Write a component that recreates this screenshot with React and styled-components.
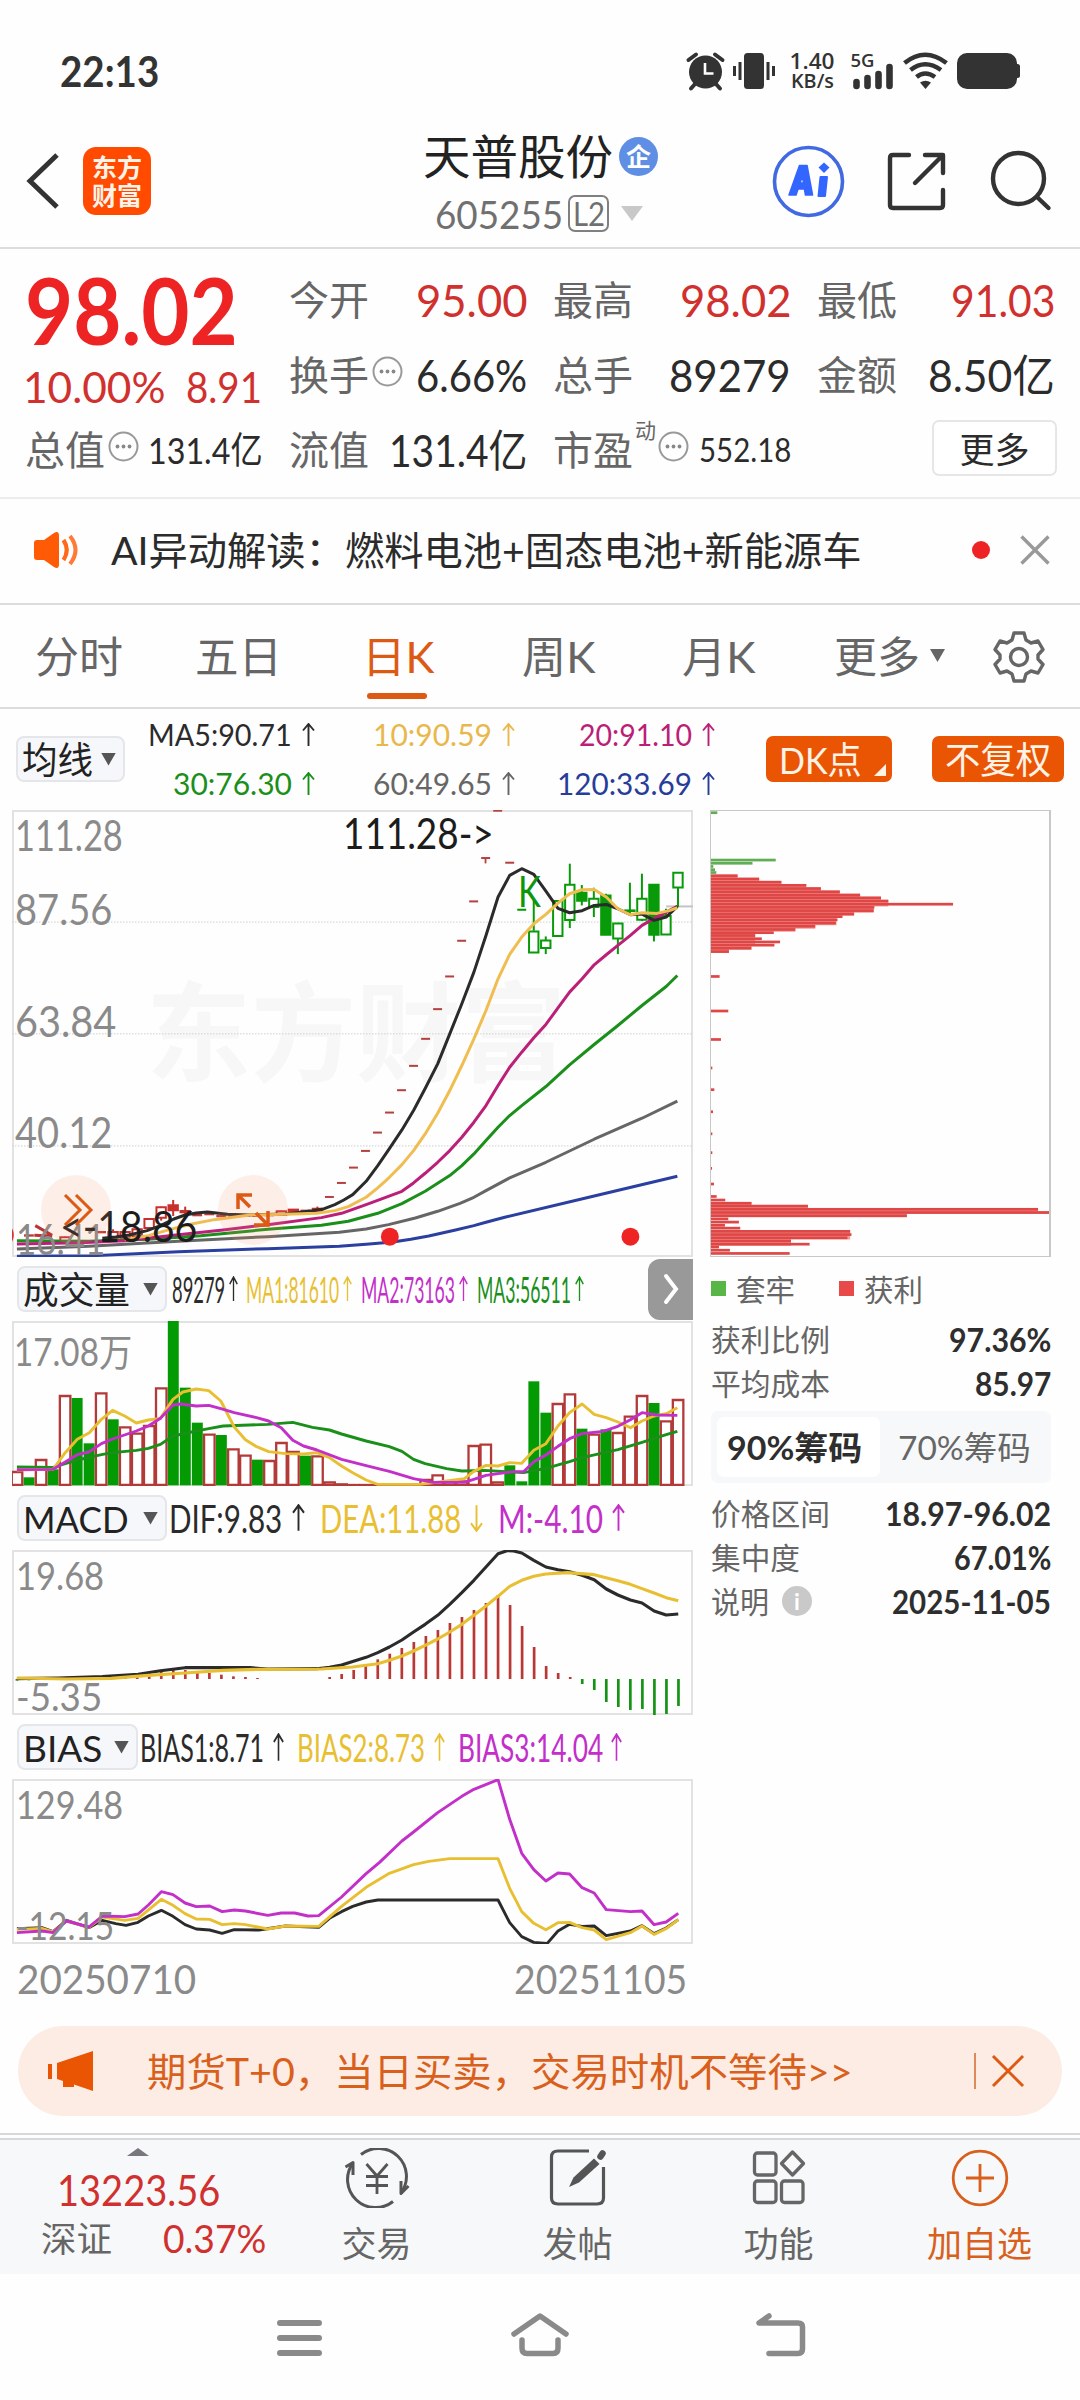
import React, { useLayoutEffect, useRef, useState } from "react";
import styled, { createGlobalStyle } from "styled-components";

const RED = "#d0312f";
const ORANGE = "#ea5504";
const GREEN = "#1a8f1a";
const PURPLE = "#c22fc9";
const GOLD = "#e9bf32";
const INK = "#2b2b2b";

// condenses a label so it takes exactly w pixels
function Fit({ w, children }) {
  const ref = useRef(null);
  const [scale, setScale] = useState(1);

  useLayoutEffect(() => {
    const natural = ref.current.offsetWidth;
    if (natural) setScale(w / natural);
  }, [w, children]);

  return (
    <FitBox $w={w}>
      <FitInner ref={ref} style={{ transform: `scaleX(${scale})` }}>
        {children}
      </FitInner>
    </FitBox>
  );
}

function Arrow({ color, down, w = 13, h = 24 }) {
  return (
    <svg width={w} height={h} viewBox="0 0 13 24" preserveAspectRatio="none">
      <path
        d={down ? "M6.5 1V23M1 16.5L6.5 23L12 16.5" : "M6.5 23V1M1 7.5L6.5 1L12 7.5"}
        fill="none"
        stroke={color}
        strokeWidth="1.9"
      />
    </svg>
  );
}

function Line({ pts, color, w = 2.2 }) {
  return (
    <polyline
      points={pts}
      fill="none"
      stroke={color}
      strokeWidth={w}
      strokeLinejoin="round"
      vectorEffect="non-scaling-stroke"
    />
  );
}

const barX = (i) => 39 + 26.88 * i;

const maLines = [
  ["#2a3fa0", "39,1367 210,1365 400,1353 600,1344 760,1337 820,1331 880,1324 920,1316 960,1306 1020,1288 1061,1275 1088,1265 1130,1250 1330,1186 1516,1127"],
  ["#666666", "39,1345 200,1337 400,1322 600,1308 760,1295 820,1285 870,1272 930,1252 980,1232 1030,1208 1061,1190 1088,1170 1141,1132 1222,1085 1330,1016 1437,953 1516,902"],
  [GREEN, "39,1320 200,1322 333,1316 450,1305 600,1286 720,1274 780,1262 846,1238 900,1209 952,1172 1007,1125 1034,1095 1061,1060 1088,1020 1115,980 1141,945 1168,915 1222,858 1275,793 1330,732 1383,675 1437,615 1491,558 1516,525"],
  ["#bb1f78", "39,1330 180,1326 280,1320 400,1302 500,1288 600,1272 720,1251 765,1238 820,1212 900,1172 926,1147 952,1118 980,1085 1007,1050 1034,1010 1061,965 1088,915 1115,855 1141,800 1168,755 1195,712 1222,672 1249,622 1275,575 1303,535 1330,493 1357,463 1383,435 1411,405 1437,375 1470,350 1516,318"],
  ["#2b2b2b", "230,1313 260,1309 290,1303 330,1290 360,1275 390,1255 415,1243 440,1237 465,1234 490,1238 510,1241 560,1243 640,1240 700,1230 725,1225 750,1212 770,1198 790,1182 820,1142 846,1095 872,1044 900,988 926,930 952,864 980,790 1007,700 1034,610 1061,515 1088,405 1115,290 1141,225 1168,205 1195,222 1222,272 1249,324 1275,337 1303,331 1330,315 1357,312 1383,325 1411,343 1437,341 1464,360 1491,350 1516,318"],
  ["#f0bd50", "280,1317 333,1305 380,1287 430,1270 480,1257 560,1243 640,1241 710,1238 750,1230 780,1218 820,1190 846,1162 872,1130 900,1092 926,1050 952,1000 980,938 1007,870 1034,795 1061,715 1088,630 1115,535 1141,462 1168,410 1195,370 1222,342 1249,308 1275,280 1303,268 1330,267 1357,290 1383,325 1411,343 1437,337 1470,339 1500,330 1516,322"],
];

// limit-up days only leave a dash
const dashes = [1189, 1147, 1101, 1051, 996, 936, 869, 796, 715, 626, 528, 421, 303, 173, 31, 187];

// [day, bodyTop, bodyBottom, wickTop, wickBottom, filled]
const candles = [
  [43, 391, 457, 300, 391, 0],
  [44, 418, 444, 408, 461, 0],
  [45, 300, 408, 300, 408, 0],
  [46, 251, 360, 190, 383, 0],
  [47, 275, 302, 254, 315, 1],
  [48, 293, 321, 262, 350, 0],
  [49, 283, 404, 280, 404, 1],
  [50, 367, 415, 367, 461, 0],
  [51, 328, 330, 247, 343, 1],
  [52, 293, 359, 220, 362, 0],
  [53, 251, 404, 251, 423, 1],
  [54, 345, 403, 325, 403, 0],
  [55, 215, 262, 215, 320, 0],
];

const earlyCandles = [
  [4, 1308, 1326, 1308, 1326, 0],
  [8, 1292, 1312, 1286, 1314, 0],
  [9, 1292, 1312, 1288, 1316, 0],
  [10, 1284, 1308, 1284, 1308, 0],
  [11, 1253, 1283, 1253, 1290, 0],
  [12, 1218, 1252, 1218, 1260, 0],
  [13, 1212, 1230, 1198, 1246, 1],
  [14, 1229, 1236, 1218, 1244, 1],
  [22, 1230, 1244, 1230, 1246, 0],
  [23, 1225, 1232, 1225, 1232, 1],
  [25, 1222, 1232, 1218, 1234, 1],
];

const smallDashes = [
  [7, 1294], [15, 1243], [16, 1240], [17, 1246], [18, 1247], [19, 1244],
  [20, 1245], [21, 1243], [24, 1230], [1, 1304],
];

const volume = [
  ["r", 660], ["g", 679], ["r", 624], ["g", 655], ["r", 432], ["g", 441], ["g", 577], ["r", 424],
  ["g", 505], ["r", 526], ["r", 545], ["r", 522], ["r", 409], ["g", 210], ["g", 410], ["g", 515],
  ["r", 548], ["g", 552], ["r", 592], ["r", 611], ["g", 626], ["r", 627], ["r", 573], ["r", 600],
  ["g", 614], ["r", 613], ["r", 691], ["r", 697], ["r", 699], ["r", 699], ["r", 699], ["r", 700],
  ["r", 697], ["r", 700], ["r", 684], ["r", 670], ["r", 690], ["r", 688], ["r", 582], ["r", 578],
  ["r", 691], ["g", 643], ["g", 691], ["g", 391], ["g", 485], ["r", 456], ["r", 427], ["g", 533],
  ["r", 548], ["g", 535], ["r", 543], ["r", 494], ["r", 432], ["g", 456], ["r", 508], ["r", 444],
];

const volumeLines = [
  [GREEN, "39,648 120,649 147,638 174,627 201,619 228,611 253,605 306,598 333,592 360,580 388,555 440,540 468,533 500,525 600,520 656,514 700,529 738,537 765,549 820,570 872,587 900,601 926,625 952,638 1000,653 1034,660 1085,658 1172,665 1222,652 1275,632 1303,620 1383,596 1437,574 1491,551 1516,541"],
  [GOLD, "39,657 120,655 147,605 174,565 201,545 228,505 253,478 280,495 306,516 333,507 360,502 388,445 410,423 440,414 468,419 495,450 525,528 550,566 575,587 602,602 640,608 680,609 710,605 738,620 765,645 790,665 820,687 846,700 940,700 1000,690 1040,683 1060,662 1088,643 1115,645 1141,635 1168,637 1195,598 1222,578 1249,525 1275,485 1303,459 1330,490 1357,500 1383,513 1411,530 1437,510 1464,495 1491,488 1516,470"],
  [PURPLE, "39,656 120,655 147,633 174,611 200,603 228,578 253,564 306,540 333,525 360,502 388,462 405,459 440,465 468,463 495,473 525,485 575,500 602,510 630,530 656,568 680,585 710,597 765,625 820,644 872,661 926,683 970,694 1040,694 1088,673 1115,668 1150,662 1172,662 1195,632 1222,612 1249,586 1275,563 1303,548 1350,541 1383,526 1411,506 1437,485 1470,492 1516,493"],
];

const macdBars = [
  569, 568, 567, 567, 566, 561, 561, 559, 557, 555, 552, 546, 538, 533, 537, 541, 546, 551, 556,
  558, 561, 564, 564, 564, 564, 564, 558, 549, 537, 522, 505, 488, 471, 453, 435, 417, 396, 378,
  357, 336, 312, 342, 405, 468, 525, 546, 558, 579, 597, 633, 648, 657, 654, 672, 669, 645,
];

const macdLines = [
  [INK, "39,563 130,561 230,557 310,550 360,539 415,530 560,530 600,534 710,533 738,529 765,522 820,499 846,485 872,468 900,447 926,423 952,400 980,373 1007,340 1034,305 1061,268 1088,228 1115,188 1135,179 1150,180 1168,186 1195,208 1222,228 1249,236 1275,242 1303,253 1330,266 1357,294 1383,312 1411,327 1437,336 1464,360 1491,372 1518,369"],
  [GOLD, "39,561 150,564 250,562 333,553 415,546 500,538 580,535 720,534 790,528 846,518 872,508 900,495 926,480 952,463 980,444 1007,423 1034,400 1061,373 1088,345 1115,316 1141,286 1168,268 1195,256 1222,249 1270,245 1330,251 1383,269 1411,280 1437,293 1464,306 1491,320 1518,329"],
];

const biasLines = [
  [INK, "39,623 95,620 120,632 150,598 200,620 230,598 260,608 283,613 308,605 333,585 362,568 388,586 415,611 440,624 470,627 498,637 525,626 580,627 640,615 714,619 740,590 765,572 790,556 820,543 846,537 1115,537 1141,605 1168,647 1195,664 1225,667 1249,630 1275,610 1303,616 1330,615 1357,644 1411,630 1437,614 1464,638 1491,621 1518,596"],
  [GOLD, "39,625 95,622 120,633 150,600 200,619 230,588 280,598 310,592 362,535 388,553 415,578 440,594 470,595 498,611 525,608 550,611 600,624 640,615 714,616 765,556 820,499 872,457 926,431 960,421 1007,413 1115,413 1141,502 1168,572 1195,607 1222,626 1249,605 1275,604 1303,620 1330,627 1357,656 1411,635 1437,615 1464,640 1491,623 1518,596"],
  [PURPLE, "39,635 95,630 120,635 150,600 200,618 230,585 280,587 310,579 333,552 362,512 388,521 415,546 440,557 470,555 498,572 525,567 550,570 600,583 630,576 660,576 690,585 714,584 765,528 820,458 850,424 900,360 926,333 980,275 1034,226 1061,205 1115,176 1141,295 1168,397 1195,446 1222,480 1249,456 1275,459 1303,500 1330,516 1357,566 1411,572 1437,570 1464,611 1491,603 1518,577"],
];

// [y, right edge]
const trapped = [[314, 81], [447, 257], [456, 187], [465, 69], [474, 74], [482, 78]];
const profit = [
  [491, 142], [500, 207], [509, 274], [518, 349], [527, 393], [536, 450], [545, 511], [553, 574],
  [562, 596], [571, 791], [580, 554], [589, 552], [598, 493], [606, 458], [615, 443], [624, 438],
  [633, 376], [642, 316], [651, 251], [659, 195], [668, 215], [677, 270], [686, 253], [695, 184],
  [704, 116], [774, 88], [871, 114], [951, 92], [1031, 66], [1092, 72], [1154, 68], [1216, 66],
  [1269, 66], [1313, 65], [1357, 71], [1392, 79], [1402, 105], [1411, 184], [1419, 354],
  [1428, 1047], [1437, 1080], [1446, 652], [1455, 114], [1464, 146], [1473, 104], [1481, 150],
  [1490, 481], [1499, 485], [1508, 473], [1517, 303], [1526, 359], [1534, 86], [1543, 119],
  [1552, 299],
];

function Candle({ d, color }) {
  const [i, top, bottom, high, low, filled] = d;
  const x = barX(i);
  return (
    <g stroke={color} strokeWidth="2" fill={filled ? color : "#fff"}>
      <line x1={x} x2={x} y1={high} y2={low} vectorEffect="non-scaling-stroke" />
      <rect
        x={x - 10.5}
        y={top + 2}
        width={21}
        height={Math.max(bottom - top - 3, 2)}
        vectorEffect="non-scaling-stroke"
      />
    </g>
  );
}

function PriceChart() {
  return (
    <Chart $h={447}>
      <Watermark>
        <Fit w={420}>东方财富</Fit>
      </Watermark>
      <Plot viewBox="28 29 1523 1340" preserveAspectRatio="none">
        {[365, 700, 1036].map((y) => (
          <line
            key={y}
            x1="28"
            x2="1551"
            y1={y}
            y2={y}
            stroke="#cfcfcf"
            strokeDasharray="1.5 1.5"
            vectorEffect="non-scaling-stroke"
          />
        ))}
        <rect x="1491" y="315" width="60" height="6" fill="#c4c4c4" />
        {smallDashes.map(([i, y]) => (
          <rect key={i} x={barX(i) - 11} y={y - 3} width="22" height="7" fill="#c23a38" />
        ))}
        {earlyCandles.map((d) => (
          <Candle key={d[0]} d={d} color="#c8302e" />
        ))}
        <path
          d="M80 1275L118 1304M78 1304L118 1306"
          stroke="#b93432"
          strokeWidth="3"
          fill="none"
          vectorEffect="non-scaling-stroke"
        />
        {dashes.map((y, k) => (
          <rect key={y} x={barX(26 + k) - 10} y={y - 3} width="20" height="6" fill="#b5413f" />
        ))}
        <rect x="1085" y="173" width="4" height="16" fill="#b5413f" />
        <rect x={barX(42) - 10} y="325" width="20" height="6" fill="#009a00" />
        {candles.map((d) => (
          <Candle key={d[0]} d={d} color="#089a08" />
        ))}
        {maLines.map(([color, pts]) => (
          <Line key={color} pts={pts} color={color} w={3} />
        ))}
        <ellipse cx="873" cy="1308" rx="20" ry="27" fill="#ee2424" />
        <ellipse cx="1411" cy="1308" rx="20" ry="27" fill="#ee2424" />
        <ellipse cx="22" cy="1303" rx="10" ry="24" fill="#d33" />
      </Plot>
      <Label $x={3} $y={10} $size={42}><Fit w={108}>111.28</Fit></Label>
      <Label $x={3} $y={84} $size={42}><Fit w={97}>87.56</Fit></Label>
      <Label $x={3} $y={196} $size={42}><Fit w={101}>63.84</Fit></Label>
      <Label $x={3} $y={307} $size={42}><Fit w={97}>40.12</Fit></Label>
      <Label $x={4} $y={414} $size={42}><Fit w={89}>16.41</Fit></Label>
      <Label $x={331} $y={8} $size={42} $color="#1c1c1c"><Fit w={151}>111.28-&gt;</Fit></Label>
      <Label $x={48} $y={401} $size={42} $color="#1c1c1c"><Fit w={137}>&lt;-18.86</Fit></Label>
      <Label $x={506} $y={66} $size={42} $color="#0d960d"><Fit w={23}>K</Fit></Label>
      <RoundTool $x={29} $y={365}>
        <svg width="70" height="70" viewBox="0 0 70 70" fill="none" stroke="#dd5a14" strokeWidth="3">
          <path d="M24 20L39 35L24 50M35 20L50 35L35 50" />
        </svg>
      </RoundTool>
      <RoundTool $x={206} $y={365}>
        <svg width="70" height="70" viewBox="0 0 70 70" fill="none" stroke="#dd5a14" strokeWidth="3.5">
          <path d="M20 34V20H34M21 21L32 32M38 38L49 49M36 50H50V36" />
        </svg>
      </RoundTool>
    </Chart>
  );
}

function VolumeChart() {
  return (
    <Chart $h={165}>
      <Plot viewBox="28 210 1523 495" preserveAspectRatio="none">
        {volume.map(([kind, top], i) =>
          kind === "g" ? (
            <rect key={i} x={barX(i) - 12} y={top} width="24.5" height={703 - top} fill="#039a03" />
          ) : (
            <rect
              key={i}
              x={barX(i) - 11.5}
              y={top + 3}
              width="23.5"
              height={Math.max(699 - top, 1)}
              fill="#fff"
              stroke="#b23a38"
              strokeWidth="2.3"
              vectorEffect="non-scaling-stroke"
            />
          )
        )}
        {volumeLines.map(([color, pts]) => (
          <Line key={color} pts={pts} color={color} w={2.9} />
        ))}
      </Plot>
      <Label $x={2} $y={15} $size={38}><Fit w={118}>17.08万</Fit></Label>
    </Chart>
  );
}

function MacdChart() {
  return (
    <Chart $h={165}>
      <Plot viewBox="28 177 1523 495" preserveAspectRatio="none">
        {macdBars.map((v, i) => (
          <rect
            key={i}
            x={39 + 26.9 * i - 3}
            y={Math.min(v, 564)}
            width="6"
            height={Math.abs(564 - v)}
            fill={v > 564 ? "#159315" : "#b93836"}
          />
        ))}
        {macdLines.map(([color, pts]) => (
          <Line key={color} pts={pts} color={color} w={3.1} />
        ))}
      </Plot>
      <Label $x={4} $y={10} $size={38}><Fit w={88}>19.68</Fit></Label>
      <Label $x={4} $y={131} $size={38}><Fit w={86}>-5.35</Fit></Label>
    </Chart>
  );
}

function BiasChart() {
  return (
    <Chart $h={165}>
      <Plot viewBox="28 174 1523 495" preserveAspectRatio="none">
        {biasLines.map(([color, pts]) => (
          <Line key={color} pts={pts} color={color} w={2.9} />
        ))}
      </Plot>
      <Label $x={4} $y={10} $size={38}><Fit w={107}>129.48</Fit></Label>
      <Label $x={4} $y={131} $size={38}><Fit w={98}>-12.15</Fit></Label>
    </Chart>
  );
}

function Dots() {
  return (
    <svg width="31" height="31" viewBox="0 0 31 31">
      <circle cx="15.5" cy="15.5" r="14" fill="none" stroke="#999" strokeWidth="2" />
      <circle cx="9.5" cy="15.5" r="1.9" fill="#888" />
      <circle cx="15.5" cy="15.5" r="1.9" fill="#888" />
      <circle cx="21.5" cy="15.5" r="1.9" fill="#888" />
    </svg>
  );
}

function App() {
  return (
    <Page>
      <GlobalStyle />

      <StatusBar>
        <Clock><Fit w={99}>22:13</Fit></Clock>
        <svg width="340" height="60" viewBox="685 41 340 60" fill="#333">
          <circle cx="705.5" cy="72" r="16.5" />
          <path d="M688.5 60L696 54.5M722.5 60L715 54.5M695 84L691 88.5M716 84L720 88.5" stroke="#333" strokeWidth="4" strokeLinecap="round" />
          <path d="M705 63V73.5H713.5" fill="none" stroke="#fff" strokeWidth="2.6" />
          <rect x="744" y="53" width="20" height="36" rx="3.5" />
          <path d="M740 62V80M768 62V80M734.5 66V76M773.5 66V76" stroke="#333" strokeWidth="3" />
          <g fontFamily="'Open Sans', 'Noto Sans', sans-serif" fontWeight="600">
            <text x="789.5" y="68.5" fontSize="21" textLength="45" lengthAdjust="spacingAndGlyphs">1.40</text>
            <text x="791" y="88" fontSize="19" textLength="43" lengthAdjust="spacingAndGlyphs">KB/s</text>
            <text x="850.5" y="67" fontSize="18" textLength="24" lengthAdjust="spacingAndGlyphs">5G</text>
          </g>
          <path d="M856.5 82V86M867.5 78V86M878.5 74V86M889.5 67V86" stroke="#333" strokeWidth="6.6" strokeLinecap="round" />
          <g fill="none" stroke="#333" strokeWidth="4.5">
            <path d="M904.5 63Q925 46.5 946.5 63" />
            <path d="M910.5 70Q925 58.5 941 70" />
            <path d="M916.5 77Q925 70 935 77" />
          </g>
          <path d="M920 82.5Q925.5 79 931 82.5L925.5 89Z" />
          <rect x="957" y="53" width="60" height="36" rx="10" />
          <rect x="1012" y="64" width="8" height="14" rx="2.5" />
        </svg>
      </StatusBar>

      <Header>
        <svg width="36" height="58" viewBox="0 0 36 58" fill="none" stroke="#333" strokeWidth="5">
          <path d="M31 3L4 29L31 55" />
        </svg>
        <Logo>
          <span>东方</span>
          <span>财富</span>
        </Logo>
        <Title>
          <NameRow>
            <Fit w={190}>天普股份</Fit>
            <Badge>企</Badge>
          </NameRow>
          <CodeRow>
            <Fit w={128}>605255</Fit>
            <Level><Fit w={32}>L2</Fit></Level>
            <Triangle $w={22} $h={15} $color="#c8c8c8" />
          </CodeRow>
        </Title>
        <HeaderIcons>
          <svg width="290" height="74" viewBox="770 144 290 74" fill="none">
            <circle cx="808.5" cy="181.5" r="34" stroke="#4169e1" strokeWidth="3.6" />
            <path d="M789 195L799.5 165.500H807L812.500 195H805.500L804.500 189H798L796 195ZM800 183H803.500L802.500 176Z" fill="#3366ff" fillRule="evenodd" stroke="#3366ff" strokeWidth="1.600" strokeLinejoin="round" />
            <path d="M820.5 177H827L825 196H818.5Z" fill="#3366ff" stroke="#3366ff" strokeWidth="2" strokeLinejoin="round" />
            <path d="M824 162.5L829.5 167.5L824 173L818.5 167.5Z" fill="#3366ff" />
            <g stroke="#333" strokeWidth="4.4" strokeLinecap="round" strokeLinejoin="round">
              <path d="M909 155H893Q890 155 890 158V205Q890 208 893 208H940Q943 208 943 205V190" />
              <path d="M925 155H943V173M942 156L915 183" />
              <circle cx="1018.5" cy="178.5" r="25.5" />
              <path d="M1037 197L1048.5 208" />
            </g>
          </svg>
        </HeaderIcons>
      </Header>

      <Quote>
        <Price><Fit w={213}>98.02</Fit></Price>
        <Cell $row={1} $col={2}>
          <Key>今开</Key><Val $red><Fit w={111}>95.00</Fit></Val>
        </Cell>
        <Cell $row={1} $col={3}>
          <Key>最高</Key><Val $red><Fit w={111}>98.02</Fit></Val>
        </Cell>
        <Cell $row={1} $col={4}>
          <Key>最低</Key><Val $red><Fit w={104}>91.03</Fit></Val>
        </Cell>
        <Change>
          <Fit w={142}>10.00%</Fit>
          <Fit w={76}>8.91</Fit>
        </Change>
        <Cell $row={2} $col={2}>
          <Key>换手<Dots /></Key><Val><Fit w={111}>6.66%</Fit></Val>
        </Cell>
        <Cell $row={2} $col={3}>
          <Key>总手</Key><Val><Fit w={122}>89279</Fit></Val>
        </Cell>
        <Cell $row={2} $col={4}>
          <Key>金额</Key><Val><Fit w={127}>8.50亿</Fit></Val>
        </Cell>
        <Cell $row={3} $col={1}>
          <Key>总值<Dots /></Key><Val $size={37}><Fit w={115}>131.4亿</Fit></Val>
        </Cell>
        <Cell $row={3} $col={2}>
          <Key>流值</Key><Val><Fit w={138}>131.4亿</Fit></Val>
        </Cell>
        <Cell $row={3} $col={3}>
          <Key>市盈<sup>动</sup><Dots /></Key><Val $size={32}><Fit w={92}>552.18</Fit></Val>
        </Cell>
        <Cell $row={3} $col={4} $end>
          <MoreButton>更多</MoreButton>
        </Cell>
      </Quote>

      <Notice>
        <svg width="46" height="38" viewBox="0 0 46 38">
          <path d="M1 12Q1 9 4 9H11L21 2Q26 -1 26 5V33Q26 39 21 36L11 29H4Q1 29 1 26Z" fill="#ff5a05" />
          <path d="M30.5 9Q37 19 30.5 29" fill="none" stroke="#ff6a1a" strokeWidth="4.2" />
          <path d="M37 5Q48 19 37 33" fill="none" stroke="#ff7a35" strokeWidth="4" />
        </svg>
        <NoticeText><Fit w={751}>AI异动解读：燃料电池+固态电池+新能源车</Fit></NoticeText>
        <RedDot />
        <svg width="30" height="30" viewBox="0 0 30 30">
          <path d="M1.5 1.5L28.5 28.5M28.5 1.5L1.5 28.5" stroke="#999" strokeWidth="3.4" />
        </svg>
      </Notice>

      <Tabs>
        <Tab $ml={35}><Fit w={88}>分时</Fit></Tab>
        <Tab $ml={72}><Fit w={87}>五日</Fit></Tab>
        <Tab $ml={80} $active><Fit w={73}>日K</Fit></Tab>
        <Tab $ml={87}><Fit w={74}>周K</Fit></Tab>
        <Tab $ml={86}><Fit w={74}>月K</Fit></Tab>
        <Tab $ml={78}><Fit w={86}>更多</Fit></Tab>
        <TabCaret><Triangle $w={15} $h={13} $color="#666" /></TabCaret>
        <svg width="52" height="52" viewBox="0 0 52 52" fill="none" stroke="#666" strokeWidth="3.4" strokeLinejoin="round">
          <path d="M21 2H31L33 9L38 12L45 10L50 18.5L45 24V28L50 33.5L45 42L38 40L33 43L31 50H21L19 43L14 40L7 42L2 33.5L7 28V24L2 18.5L7 10L14 12L19 9Z" />
          <circle cx="26" cy="26" r="8.5" />
        </svg>
      </Tabs>

      <MaRow>
        <Picker $w={109}>
          <Fit w={71}>均线</Fit>
          <Triangle $w={15} $h={13} $color="#555" />
        </Picker>
        <MaGrid>
          <Ma $color={INK}><Fit w={144}>MA5:90.71</Fit><Arrow color={INK} /></Ma>
          <Ma $color="#e9b84d"><Fit w={119}>10:90.59</Fit><Arrow color="#e9b84d" /></Ma>
          <Ma $color="#bb1f78"><Fit w={113}>20:91.10</Fit><Arrow color="#bb1f78" /></Ma>
          <Ma $color={GREEN}><Fit w={119}>30:76.30</Fit><Arrow color={GREEN} /></Ma>
          <Ma $color="#666"><Fit w={119}>60:49.65</Fit><Arrow color="#666" /></Ma>
          <Ma $color="#273d9a"><Fit w={135}>120:33.69</Fit><Arrow color="#273d9a" /></Ma>
        </MaGrid>
        <OrangeButton $w={126} $corner><Fit w={83}>DK点</Fit></OrangeButton>
        <OrangeButton $w={132}><Fit w={106}>不复权</Fit></OrangeButton>
      </MaRow>

      <Body>
        <Left>
          <PriceChart />
          <Indicator>
            <Picker $w={150}>
              <Fit w={107}>成交量</Fit>
              <Triangle $w={15} $h={13} $color="#555" />
            </Picker>
            <Stat $size={36} $color={INK} $ml={5}><Fit w={53}>89279</Fit><Arrow color={INK} w={9} h={26} /></Stat>
            <Stat $size={36} $color={GOLD} $ml={8}><Fit w={93}>MA1:81610</Fit><Arrow color={GOLD} w={9} h={26} /></Stat>
            <Stat $size={36} $color={PURPLE} $ml={9}><Fit w={94}>MA2:73163</Fit><Arrow color={PURPLE} w={9} h={26} /></Stat>
            <Stat $size={36} $color={GREEN} $ml={9}><Fit w={94}>MA3:56511</Fit><Arrow color={GREEN} w={9} h={26} /></Stat>
            <SideButton>
              <svg width="18" height="38" viewBox="0 0 18 38" fill="none" stroke="#fff" strokeWidth="4" strokeLinecap="round">
                <path d="M4 6L14 19L4 32" />
              </svg>
            </SideButton>
          </Indicator>
          <VolumeChart />
          <Indicator>
            <Picker $w={150}>
              <Fit w={106}>MACD</Fit>
              <Triangle $w={15} $h={13} $color="#555" />
            </Picker>
            <Stat $size={38} $color={INK} $ml={2} $gap={10}><Fit w={113}>DIF:9.83</Fit><Arrow color={INK} h={28} /></Stat>
            <Stat $size={38} $color={GOLD} $ml={15} $gap={9}><Fit w={141}>DEA:11.88</Fit><Arrow color={GOLD} h={28} down /></Stat>
            <Stat $size={38} $color={PURPLE} $ml={15} $gap={9}><Fit w={105}>M:-4.10</Fit><Arrow color={PURPLE} h={28} /></Stat>
          </Indicator>
          <MacdChart />
          <Indicator>
            <Picker $w={121}>
              <Fit w={79}>BIAS</Fit>
              <Triangle $w={15} $h={13} $color="#555" />
            </Picker>
            <Stat $size={38} $color={INK} $ml={2} $gap={9}><Fit w={124}>BIAS1:8.71</Fit><Arrow color={INK} w={11} h={29} /></Stat>
            <Stat $size={38} $color={GOLD} $ml={13} $gap={9}><Fit w={128}>BIAS2:8.73</Fit><Arrow color={GOLD} w={11} h={29} /></Stat>
            <Stat $size={38} $color={PURPLE} $ml={13} $gap={8}><Fit w={145}>BIAS3:14.04</Fit><Arrow color={PURPLE} w={11} h={29} /></Stat>
          </Indicator>
          <BiasChart />
          <Dates>
            <Fit w={179}>20250710</Fit>
            <Fit w={173}>20251105</Fit>
          </Dates>
        </Left>

        <Right>
          <ChipPlot viewBox="62 309 1018 1250" preserveAspectRatio="none">
            {trapped.map(([y, x]) => (
              <rect key={y} x="62" y={y - 4} width={x - 62} height="7.6" fill="#62ac55" />
            ))}
            <path d="M62 488H142V497H207V506H274V515H349V524H393V533H450V542H511V551H574V559H596V577H552V595H493V604H440V630H376V640H316V648H195V683H184V692H116V708H62Z" fill="#f39a96" />
            <path d="M62 1408H184V1417H354V1426H1047V1434H1080V1441H652V1450H62ZM62 1486H481V1513H303V1530H62Z" fill="#f39a96" />
            {profit.map(([y, x]) => (
              <rect key={y} x="62" y={y - 4} width={x - 62} height="7.6" fill="#df4746" />
            ))}
          </ChipPlot>
          <Legend>
            <Swatch $color="#58b646" /><Fit w={59}>套牢</Fit>
            <Swatch $color="#e84a4a" $ml={44} /><Fit w={59}>获利</Fit>
          </Legend>
          <Row><Fit w={119}>获利比例</Fit><b><Fit w={102}>97.36%</Fit></b></Row>
          <Row><Fit w={119}>平均成本</Fit><b><Fit w={76}>85.97</Fit></b></Row>
          <Toggle>
            <Option $active><Fit w={135}>90%筹码</Fit></Option>
            <Option><Fit w={133}>70%筹码</Fit></Option>
          </Toggle>
          <Row><Fit w={119}>价格区间</Fit><b><Fit w={166}>18.97-96.02</Fit></b></Row>
          <Row><Fit w={89}>集中度</Fit><b><Fit w={97}>67.01%</Fit></b></Row>
          <Row>
            <Fit w={58}>说明</Fit>
            <Info>i</Info>
            <b><Fit w={159}>2025-11-05</Fit></b>
          </Row>
        </Right>
      </Body>

      <Banner>
        <svg width="46" height="40" viewBox="0 0 46 40" fill={ORANGE}>
          <rect x="0" y="13" width="4" height="15" />
          <path d="M9 12L45 0V40L26 33.5V36H15V30L9 28Z" />
        </svg>
        <BannerText><Fit w={706}>期货T+0，当日买卖，交易时机不等待&gt;&gt;</Fit></BannerText>
        <Divider />
        <svg width="34" height="34" viewBox="0 0 34 34">
          <path d="M2 2L32 32M32 2L2 32" stroke="#dd5a14" strokeWidth="3" />
        </svg>
      </Banner>

      <BottomBar>
        <IndexBox>
          <UpCaret />
          <IndexValue><Fit w={163}>13223.56</Fit></IndexValue>
          <IndexRow>
            <Fit w={71}>深证</Fit>
            <IndexPct><Fit w={103}>0.37%</Fit></IndexPct>
          </IndexRow>
        </IndexBox>
        <Action>
          <svg width="66" height="60" viewBox="0 0 66 60" fill="none" stroke="#555" strokeWidth="3">
            <path d="M17 6.5A28 28 0 0 1 57 45M49 53.5A28 28 0 0 1 9 15" />
            <path d="M1.5 19L9 14.5V27M64.5 38L57 45.5V33" strokeLinejoin="round" />
            <path d="M22.5 16L33 28L43.5 16M33 28V46M22 28.5H44M22 37.5H44" strokeWidth="2.8" />
          </svg>
          <span>交易</span>
        </Action>
        <Action>
          <svg width="66" height="60" viewBox="0 0 66 60" fill="none" stroke="#555" strokeWidth="3.2">
            <path d="M44 3H13Q6.5 3 6.5 9V50Q6.5 56 13 56H52Q58.5 56 58.5 50V19" />
            <path d="M55.5 8.5L57.5 5.5" strokeWidth="6.5" strokeLinecap="round" />
            <path d="M24 39L28.500 29.500L49 10.500L54.500 16L34 34.500Z" fill="#555" stroke="none" />
          </svg>
          <span>发帖</span>
        </Action>
        <Action>
          <svg width="66" height="60" viewBox="0 0 66 60" fill="none" stroke="#666" strokeWidth="3.3">
            <rect x="8.5" y="5" width="21.5" height="22" rx="3" />
            <rect x="8.5" y="33" width="21.5" height="21.5" rx="3" />
            <rect x="35.5" y="33" width="21.5" height="21.5" rx="3" />
            <path d="M46.5 4L57.5 15.5L46.5 27L35.5 15.5Z" strokeLinejoin="round" />
          </svg>
          <span>功能</span>
        </Action>
        <Action $hot>
          <svg width="66" height="60" viewBox="0 0 66 60" fill="none" stroke="#d9601c" strokeWidth="2.8">
            <circle cx="33" cy="30" r="26.8" />
            <path d="M33 16V44M19 30H47" />
          </svg>
          <span>加自选</span>
        </Action>
      </BottomBar>

      <SystemNav>
        <svg width="48" height="44" viewBox="0 0 48 44" stroke="#8a8a8a" strokeWidth="6" strokeLinecap="round">
          <path d="M4 10H43M4 25H43M4 40H43" />
        </svg>
        <svg width="60" height="46" viewBox="0 0 60 46" fill="none" stroke="#8a8a8a" strokeWidth="5.5" strokeLinecap="round">
          <path d="M4 22L30 4L56 22" strokeLinejoin="round" />
          <path d="M12 28V36Q12 41.5 17 41.5H43Q48 41.5 48 36V28" />
        </svg>
        <svg width="50" height="44" viewBox="0 0 50 44" fill="none" stroke="#8a8a8a" strokeWidth="5.5" strokeLinecap="round">
          <path d="M13 3L3 10H42Q46.5 10 46.5 14V36Q46.5 40.5 42 40.5H13" strokeLinejoin="round" />
        </svg>
      </SystemNav>
    </Page>
  );
}

const GlobalStyle = createGlobalStyle`
  * {
    box-sizing: border-box;
  }

  body {
    margin: 0;
    background-color: #fff;
  }

  svg {
    display: block;
    flex-shrink: 0;
  }
`;

const Page = styled.div`
  display: flex;
  flex-direction: column;
  width: 1080px;
  height: 2400px;
  overflow: hidden;
  background-color: #fefefe;
  color: #333;
  font-family: Lato, "Noto Sans CJK SC", sans-serif;
  line-height: 1;
`;

const FitBox = styled.span`
  display: inline-block;
  flex-shrink: 0;
  width: ${(p) => p.$w}px;
  white-space: nowrap;
`;

const FitInner = styled.span`
  display: inline-block;
  transform-origin: 0 50%;
`;

const Triangle = styled.span`
  flex-shrink: 0;
  width: ${(p) => p.$w}px;
  height: ${(p) => p.$h}px;
  background-color: ${(p) => p.$color};
  clip-path: polygon(0 0, 100% 0, 50% 100%);
`;

const StatusBar = styled.div`
  display: flex;
  align-items: center;
  justify-content: space-between;
  height: 110px;
  padding: 32px 55px 0 60px;
`;

const Clock = styled.div`
  font-size: 42px;
  font-weight: 700;
`;

const Header = styled.div`
  display: flex;
  align-items: center;
  height: 139px;
  padding: 5px 20px 0 26px;
  border-bottom: 2px solid #dcdcdc;
`;

const Logo = styled.div`
  display: flex;
  flex-direction: column;
  align-items: center;
  justify-content: center;
  gap: 3px;
  width: 68px;
  height: 68px;
  margin-left: 21px;
  border-radius: 13px;
  background-color: #ff4a00;
  color: #fff2e8;
  font-size: 25px;
  font-weight: 700;
`;

const Title = styled.div`
  display: flex;
  flex-direction: column;
  gap: 15px;
  width: 240px;
  margin-left: 272px;
  padding-top: 3px;
`;

const NameRow = styled.div`
  display: flex;
  align-items: center;
  gap: 6px;
  color: #222;
  font-size: 47px;
`;

const Badge = styled.span`
  display: flex;
  align-items: center;
  justify-content: center;
  width: 39px;
  height: 39px;
  border-radius: 50%;
  background-color: #5f8fe4;
  color: #fff;
  font-size: 25px;
  font-weight: 700;
`;

const CodeRow = styled.div`
  display: flex;
  align-items: center;
  padding-left: 12px;
  color: #707070;
  font-size: 38px;
`;

const Level = styled.span`
  display: flex;
  align-items: center;
  justify-content: center;
  width: 41px;
  height: 37px;
  margin: 0 12px 0 5px;
  border: 2px solid #808080;
  border-radius: 7px;
  font-size: 33px;
`;

const HeaderIcons = styled.div`
  margin-left: auto;
`;

const Quote = styled.div`
  display: grid;
  grid-template-columns: repeat(4, 237px);
  grid-template-rows: 75px 75px 75px;
  column-gap: 27px;
  height: 250px;
  padding: 13px 25px 0;
  border-bottom: 2px solid #ececec;
`;

const Price = styled.div`
  grid-area: 1 / 1;
  align-self: center;
  padding-top: 20px;
  color: #ee2424;
  font-size: 91px;
  font-weight: 700;
`;

const Change = styled.div`
  grid-area: 2 / 1;
  display: flex;
  align-items: center;
  justify-content: space-between;
  margin-left: -2px;
  padding-top: 24px;
  color: ${RED};
  font-size: 43px;
`;

const Cell = styled.div`
  grid-area: ${(p) => p.$row} / ${(p) => p.$col};
  display: flex;
  align-items: center;
  justify-content: ${(p) => (p.$end ? "flex-end" : "space-between")};
`;

const Key = styled.span`
  display: flex;
  align-items: center;
  color: #666;
  font-size: 40px;

  svg {
    margin-left: 3px;
    margin-top: -6px;
  }

  sup {
    align-self: flex-start;
    margin: -11px -1px 0 2px;
    font-size: 21px;
    line-height: 1;
  }
`;

const Val = styled.span`
  margin-right: -1px;
  color: ${(p) => (p.$red ? RED : "#2b2b2b")};
  font-size: ${(p) => p.$size || 44}px;
`;

const MoreButton = styled.button`
  width: 125px;
  height: 56px;
  margin-right: -3px;
  margin-bottom: 4px;
  padding: 0 0 2px;
  border: 2px solid #e6e6e6;
  border-radius: 7px;
  background-color: #fff;
  color: #2b2b2b;
  font-family: inherit;
  font-size: 35px;
`;

const Notice = styled.div`
  display: flex;
  align-items: center;
  height: 106px;
  padding: 0 30px 2px 33px;
  border-bottom: 2px solid #dcdcdc;
`;

const NoticeText = styled.div`
  flex: 1;
  margin-left: 32px;
  color: #2b2b2b;
  font-size: 39px;
`;

const RedDot = styled.span`
  width: 18px;
  height: 18px;
  margin-right: 30px;
  border-radius: 50%;
  background-color: #ee2424;
`;

const Tabs = styled.div`
  display: flex;
  align-items: center;
  height: 104px;
  padding-top: 1px;
  border-bottom: 2px solid #dcdcdc;
`;

const Tab = styled.div`
  position: relative;
  margin-left: ${(p) => p.$ml}px;
  color: ${(p) => (p.$active ? "#dc5a14" : "#666")};
  font-size: 43px;

  &::after {
    content: "";
    display: ${(p) => (p.$active ? "block" : "none")};
    position: absolute;
    left: 5px;
    bottom: -21px;
    width: 60px;
    height: 6px;
    border-radius: 3px;
    background-color: #dc5a14;
  }
`;

const TabCaret = styled.div`
  display: flex;
  margin: 0 48px 2px 10px;
`;

const MaRow = styled.div`
  display: flex;
  align-items: center;
  height: 101px;
  padding: 0 16px 1px;
`;

const Picker = styled.div`
  display: flex;
  flex-shrink: 0;
  align-items: center;
  justify-content: space-between;
  width: ${(p) => p.$w}px;
  height: 46px;
  padding: 0 7px 0 4px;
  border: 2px solid #e4e6ea;
  border-radius: 8px;
  background-color: #f6f7fa;
  color: #222;
  font-size: 37px;
`;

const MaGrid = styled.div`
  display: grid;
  grid-template-columns: 190px 200px 200px;
  grid-template-rows: 49px 49px;
  flex-shrink: 0;
`;

const Ma = styled.div`
  display: flex;
  align-items: center;
  justify-content: flex-end;
  gap: 10px;
  color: ${(p) => p.$color};
  font-size: 31px;
`;

const OrangeButton = styled.div`
  position: relative;
  display: flex;
  flex-shrink: 0;
  align-items: center;
  width: ${(p) => p.$w}px;
  height: 46px;
  margin-left: ${(p) => (p.$corner ? 51 : 40)}px;
  padding-left: 13px;
  border-radius: 7px;
  background-color: ${ORANGE};
  color: #fff3e6;
  font-size: 37px;

  &::after {
    content: "";
    display: ${(p) => (p.$corner ? "block" : "none")};
    position: absolute;
    right: 6px;
    bottom: 6px;
    width: 12px;
    height: 12px;
    background-color: #fff3e6;
    clip-path: polygon(100% 0, 100% 100%, 0 100%);
  }
`;

const Body = styled.div`
  display: flex;
  height: 1201px;
`;

const Left = styled.div`
  flex-shrink: 0;
  width: 693px;
  padding-left: 12px;
`;

const Chart = styled.div`
  position: relative;
  height: ${(p) => p.$h}px;

  &::after {
    content: "";
    position: absolute;
    inset: 0;
    border: 2px solid #e2e2e2;
    z-index: -1;
  }

  z-index: 0;
`;

const Plot = styled.svg`
  width: 100%;
  height: 100%;
`;

const Label = styled.div`
  position: absolute;
  left: ${(p) => p.$x}px;
  top: ${(p) => p.$y}px;
  color: ${(p) => p.$color || "#8a8a8a"};
  font-size: ${(p) => p.$size}px;
  line-height: 30px;
`;

const Watermark = styled.div`
  position: absolute;
  left: 134px;
  top: 167px;
  z-index: -1;
  color: #f7f7f7;
  font-size: 108px;
  font-weight: 700;
`;

const RoundTool = styled.div`
  position: absolute;
  left: ${(p) => p.$x}px;
  top: ${(p) => p.$y}px;
  width: 70px;
  height: 70px;
  border-radius: 50%;
  background-color: rgba(250, 150, 100, 0.15);
`;

const Indicator = styled.div`
  display: flex;
  align-items: center;
  height: 64px;
  padding-left: 5px;
`;

const Stat = styled.div`
  display: flex;
  flex-shrink: 0;
  align-items: center;
  gap: ${(p) => p.$gap || 4}px;
  margin-left: ${(p) => p.$ml}px;
  color: ${(p) => p.$color};
  font-size: ${(p) => p.$size}px;
`;

const SideButton = styled.div`
  display: flex;
  align-items: center;
  justify-content: center;
  width: 45px;
  height: 61px;
  margin-left: auto;
  border-radius: 12px 0 0 12px;
  background-color: #999;
`;

const Dates = styled.div`
  display: flex;
  align-items: center;
  justify-content: space-between;
  height: 68px;
  padding: 0 6px 0 5px;
  color: #8a8a8a;
  font-size: 41px;
`;

const Right = styled.div`
  display: flex;
  flex-direction: column;
  flex-shrink: 0;
  width: 341px;
  margin-left: 17px;
  color: #666;
  font-size: 30px;
`;

const ChipPlot = styled.svg`
  width: 341px;
  height: 447px;
  border: 2px solid #c8c8c8;
  border-width: 1px 2px 1px 1px;
`;

const Legend = styled.div`
  display: flex;
  align-items: center;
  height: 60px;
  padding-top: 3px;
`;

const Swatch = styled.span`
  width: 15px;
  height: 15px;
  margin: 0 10px 0 ${(p) => p.$ml || 1}px;
  background-color: ${(p) => p.$color};
`;

const Row = styled.div`
  display: flex;
  align-items: center;
  height: 44px;
  padding-left: 1px;

  b {
    margin-left: auto;
    color: #2e2e2e;
    font-size: 33px;
    font-weight: 700;
  }
`;

const Toggle = styled.div`
  display: flex;
  align-items: center;
  height: 72px;
  margin: 6px 0 8px 1px;
  padding: 6px;
  border-radius: 7px;
  background-color: #f7f8fa;
`;

const Option = styled.div`
  display: flex;
  align-items: center;
  justify-content: center;
  width: 163px;
  height: 60px;
  padding: ${(p) => (p.$active ? "0 8px 0 0" : "0 0 0 5px")};
  border-radius: 7px;
  background-color: ${(p) => (p.$active ? "#fff" : "transparent")};
  color: ${(p) => (p.$active ? "#2e2e2e" : "#666")};
  font-size: 33px;
  font-weight: ${(p) => (p.$active ? 700 : 400)};
`;

const Info = styled.span`
  display: flex;
  align-items: center;
  justify-content: center;
  width: 30px;
  height: 30px;
  margin-left: 13px;
  border-radius: 50%;
  background-color: #c9c9c9;
  color: #fff;
  font-size: 23px;
  font-weight: 700;
`;

const Banner = styled.div`
  display: flex;
  flex-shrink: 0;
  align-items: center;
  height: 90px;
  margin: 15px 18px 17px;
  padding: 0 37px 0 30px;
  border-radius: 45px;
  background-color: #fcece3;
`;

const BannerText = styled.div`
  flex: 1;
  margin-left: 53px;
  color: #d9601c;
  font-size: 39px;
`;

const Divider = styled.span`
  width: 2px;
  height: 36px;
  margin-right: 15px;
  background-color: #dc8a5c;
`;

const BottomBar = styled.div`
  display: flex;
  flex-shrink: 0;
  height: 141px;
  border-top: 2px solid #d8d8d8;
  background-color: #f7f8fa;
  box-shadow: inset 0 3px 0 #fefefe, inset 0 5px 0 #d8d8d8;
`;

const IndexBox = styled.div`
  display: flex;
  flex-direction: column;
  align-items: center;
  width: 276px;
  padding-top: 13px;
`;

const UpCaret = styled.span`
  width: 22px;
  height: 8px;
  background-color: #77777c;
  clip-path: polygon(50% 0, 100% 100%, 0 100%);
`;

const IndexValue = styled.div`
  margin-top: 13px;
  color: ${RED};
  font-size: 42px;
`;

const IndexRow = styled.div`
  display: flex;
  align-items: center;
  justify-content: space-between;
  width: 225px;
  margin-top: 8px;
  margin-left: 31px;
  color: #666;
  font-size: 35px;
`;

const IndexPct = styled.span`
  color: ${RED};
  font-size: 39px;
`;

const Action = styled.div`
  display: flex;
  flex-direction: column;
  align-items: center;
  gap: 18px;
  width: 201px;
  padding-top: 13px;
  color: ${(p) => (p.$hot ? "#d9601c" : "#666")};
  font-size: 35px;
`;

const SystemNav = styled.div`
  display: flex;
  align-items: center;
  justify-content: center;
  gap: 186px;
  flex: 1;
  padding: 0 0 5px 2px;
`;

export default App;
